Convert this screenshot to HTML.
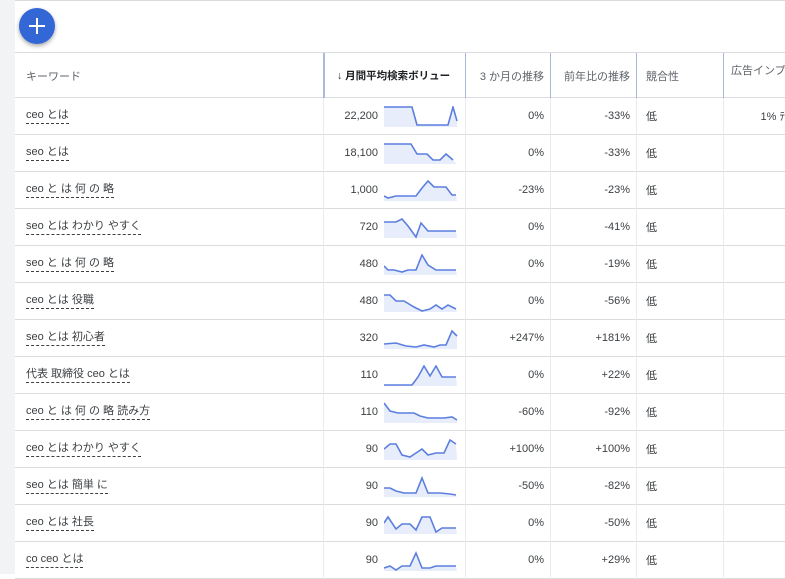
<!DOCTYPE html>
<html><head><meta charset="utf-8"><style>
*{margin:0;padding:0;box-sizing:border-box}
body{width:785px;height:574px;overflow:hidden;background:#fff;font-family:"Liberation Sans","Noto Sans CJK JP",sans-serif;position:relative;color:#3c4043}
.strip{position:absolute;left:0;top:0;width:15px;height:574px;background:#f1f3f4}
.top{position:absolute;left:15px;top:0;right:0;height:1px;background:#dadce0}
.fab{position:absolute;left:19px;top:8px;width:36px;height:36px;border-radius:50%;background:#3367d6;box-shadow:0 2px 4px rgba(0,0,0,.35)}
.fab:before,.fab:after{content:"";position:absolute;background:#fff;left:10px;top:17px;width:16px;height:2px}
.fab:after{left:17px;top:10px;width:2px;height:16px}
.hdr{position:absolute;left:15px;top:52px;right:0;height:46px;border-top:1px solid #dadce0;border-bottom:1px solid #dadce0}
.h{position:absolute;top:0;height:45px;font-size:11px;color:#5f6368;display:flex;align-items:center;white-space:nowrap}
.vs{position:absolute;top:0;width:1px;height:45px;background:#a9b9dc}
.row{position:absolute;left:15px;right:0;height:37px;border-bottom:1px solid #dadce0;font-size:11px}
.c{position:absolute;top:0;height:36px;display:flex;align-items:center;white-space:nowrap}
.kw{left:11px;border-bottom:1px dashed #3c4043;height:auto;top:11px;line-height:13px;padding-bottom:1px}
.r{justify-content:flex-end}
.vl{position:absolute;top:0;width:1px;height:37px;background:#e8eaed}
svg{position:absolute;left:369px;top:8px}
</style></head><body>
<div class="strip"></div><div class="top"></div>
<div class="fab"></div>
<div class="hdr">
<div class="h" style="left:11px">キーワード</div>
<div class="vs" style="left:308px;width:2px"></div>
<div class="h" style="left:322px;color:#202124;font-weight:bold;font-size:10.5px">↓ 月間平均検索ボリュー</div>
<div class="vs" style="left:450px"></div>
<div class="h" style="left:460px;width:69px;justify-content:flex-end">3 か月の推移</div>
<div class="vs" style="left:535px"></div>
<div class="h" style="left:545px;width:70px;justify-content:flex-end">前年比の推移</div>
<div class="vs" style="left:621px"></div>
<div class="h" style="left:631px">競合性</div>
<div class="vs" style="left:708px"></div>
<div class="h" style="left:716px;align-items:flex-start;padding-top:9px">広告インプ</div>
</div>
<div id="rows"></div>
<script>
var d=[
["ceo とは","22,200","0%","-33%","0,1 28,1 33,19 64,19 69,1 73,15","1% ﾃ"],
["seo とは","18,100","0%","-33%","0,1 27,1 33,11 43,11 49,17 56,17 62,11 69,17",""],
["ceo と は 何 の 略","1,000","-23%","-23%","0,16 4,18 12,16 32,16 38,8 44,1 50,7 62,7 68,15 72,15",""],
["seo とは わかり やすく","720","0%","-41%","0,5 12,5 18,2 24,9 32,20 37,6 44,14 72,14",""],
["seo と は 何 の 略","480","0%","-19%","0,12 4,16 10,16 18,18 24,16 32,16 38,1 44,11 52,16 72,16",""],
["ceo とは 役職","480","0%","-56%","0,4 6,4 12,10 20,10 30,16 38,20 46,18 52,14 58,18 64,14 72,18",""],
["seo とは 初心者","320","+247%","+181%","0,16 12,15 22,18 32,19 40,17 50,19 56,17 62,17 68,3 73,8",""],
["代表 取締役 ceo とは","110","0%","+22%","0,20 28,20 34,12 40,1 46,11 52,1 58,12 72,12",""],
["ceo と は 何 の 略 読み方","110","-60%","-92%","0,1 6,9 14,11 30,11 36,14 44,16 52,16 60,16 68,15 73,18",""],
["ceo とは わかり やすく","90","+100%","+100%","0,10 6,5 12,5 18,16 26,18 32,14 38,10 44,16 52,14 60,14 66,1 72,5",""],
["seo とは 簡単 に","90","-50%","-82%","0,12 6,12 12,15 20,17 32,17 38,2 44,17 56,17 66,18 72,19",""],
["ceo とは 社長","90","0%","-50%","0,10 4,4 12,16 18,11 26,11 32,17 38,4 46,4 52,19 58,15 72,15",""],
["co ceo とは","90","0%","+29%","0,18 6,16 12,20 18,16 26,16 32,3 38,18 46,18 52,16 72,16",""]];
var h="";
d.forEach(function(r,i){
var y=98+i*37;
h+='<div class="row" style="top:'+y+'px"><div class="c kw">'+r[0]+'</div>'+
'<div class="vl" style="left:308px"></div><div class="c r" style="left:310px;width:53px">'+r[1]+'</div>'+
'<svg width="74" height="22" viewBox="0 0 74 22"><polygon points="'+r[4]+' 73,21 0,21" fill="#e8edfb"/><polyline points="'+r[4]+'" fill="none" stroke="#5b7fe0" stroke-width="1.6"/></svg>'+
'<div class="vl" style="left:450px"></div><div class="c r" style="left:452px;width:77px">'+r[2]+'</div>'+
'<div class="vl" style="left:535px"></div><div class="c r" style="left:537px;width:78px">'+r[3]+'</div>'+
'<div class="vl" style="left:621px"></div><div class="c" style="left:631px">低</div>'+
'<div class="vl" style="left:708px"></div><div class="c r" style="left:710px;width:60px">'+r[5]+'</div></div>';
});
document.getElementById("rows").innerHTML=h;
</script>
</body></html>
